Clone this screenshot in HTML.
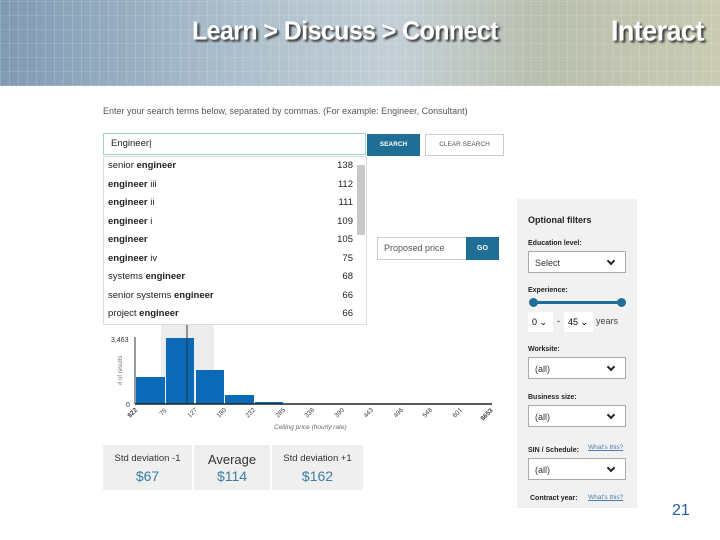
<!DOCTYPE html>
<html><head><style>
body{margin:0;width:720px;height:540px;position:relative;background:#fff;font-family:"Liberation Sans",sans-serif;overflow:hidden}
.a{position:absolute}
.hdr{left:0;top:0;width:720px;height:86px;background:linear-gradient(90deg,#7f9ab3 0%,#a9bccb 30%,#c3cfd6 55%,#b9bfae 75%,#c9cbb2 100%)}
.hdr:after{content:"";position:absolute;left:0;top:0;right:0;bottom:0;background:repeating-linear-gradient(90deg,rgba(255,255,255,.15) 0 1px,transparent 1px 9px),repeating-linear-gradient(0deg,rgba(255,255,255,.12) 0 1px,transparent 1px 14px)}
.ht{color:#fff;font-weight:bold;font-size:25px;text-shadow:2px 2px 2px #333;z-index:2;letter-spacing:-0.6px;transform:scaleY(1.05)}
.row{left:108px;width:245px;font-size:9.5px;color:#222;height:18.5px;line-height:18px}
.row span{position:absolute;right:0}
.sel{background:#fff;border:1px solid #aaa;font-size:9px;color:#333;height:22px;line-height:22px;padding-left:6px;box-sizing:border-box}
.sel:after{content:"";position:absolute;right:11px;top:6px;width:4px;height:4px;border-right:2px solid #222;border-bottom:2px solid #222;transform:rotate(45deg)}
.lb{font-size:7px;font-weight:bold;color:#222}
.cell{top:445px;height:45px;background:#efefef;text-align:center;color:#333}
.cell b{display:block;font-weight:normal;color:#3a7ea6;font-size:14px;margin-top:4px}
</style></head><body>
<div class="a hdr"></div>
<div class="a ht" style="left:192px;top:17px">Learn &gt; Discuss &gt; Connect</div>
<div class="a ht" style="left:611px;top:16px;font-size:27px">Interact</div>

<div class="a" style="left:103px;top:106px;font-size:9px;color:#555">Enter your search terms below, separated by commas. (For example: Engineer, Consultant)</div>
<div class="a" style="left:103px;top:133px;width:263px;height:22px;border:1px solid #9fd3d0;box-sizing:border-box;font-size:9.5px;line-height:20px;padding-left:7px;color:#222">Engineer|</div>
<div class="a" style="left:367px;top:134px;width:53px;height:22px;background:#1f6e96;color:#fff;font-size:6.5px;font-weight:bold;text-align:center;line-height:22px">SEARCH</div>
<div class="a" style="left:425px;top:134px;width:79px;height:22px;border:1px solid #ccc;box-sizing:border-box;color:#555;font-size:6.5px;text-align:center;line-height:20px">CLEAR SEARCH</div>

<div class="a" style="left:103px;top:156px;width:264px;height:169px;background:#fff;border:1px solid #ddd;box-sizing:border-box"></div>
<div class="a" style="left:357px;top:165px;width:8px;height:70px;background:#c8c8c8"></div>
<div class="a row" style="top:157px">senior <b>engineer</b><span>138</span></div>
<div class="a row" style="top:175.5px"><b>engineer</b> iii<span>112</span></div>
<div class="a row" style="top:194px"><b>engineer</b> ii<span>111</span></div>
<div class="a row" style="top:212.5px"><b>engineer</b> i<span>109</span></div>
<div class="a row" style="top:231px"><b>engineer</b><span>105</span></div>
<div class="a row" style="top:249.5px"><b>engineer</b> iv<span>75</span></div>
<div class="a row" style="top:268px">systems <b>engineer</b><span>68</span></div>
<div class="a row" style="top:286.5px">senior systems <b>engineer</b><span>66</span></div>
<div class="a row" style="top:305px">project <b>engineer</b><span>66</span></div>

<div class="a" style="left:377px;top:237px;width:90px;height:23px;border:1px solid #ccc;box-sizing:border-box;font-size:9px;color:#555;line-height:21px;padding-left:6px">Proposed price</div>
<div class="a" style="left:466px;top:237px;width:33px;height:23px;background:#1f6e96;color:#fff;font-size:7px;font-weight:bold;text-align:center;line-height:23px">GO</div>

<svg class="a" style="left:100px;top:320px" width="400" height="120">
<rect x="61" y="5" width="53" height="79" fill="#ececec"/>
<line x1="35" y1="17" x2="35" y2="84" stroke="#333"/>
<rect x="36" y="57" width="29" height="27" fill="#0a6ab8"/>
<rect x="66" y="18" width="28" height="66" fill="#0a6ab8"/>
<rect x="96" y="50" width="28" height="34" fill="#0a6ab8"/>
<rect x="125" y="75" width="29" height="9" fill="#0a6ab8"/>
<rect x="155" y="82" width="28" height="2" fill="#0a6ab8"/>
<line x1="87" y1="5" x2="87" y2="84" stroke="#333"/>
<line x1="35" y1="84" x2="392" y2="84" stroke="#222" stroke-width="1.5"/>
<text x="11" y="22" font-size="7" fill="#333">3,463</text>
<text x="26" y="87" font-size="7" fill="#333">0</text>
<text x="22" y="65" font-size="6" fill="#777" transform="rotate(-90 22 65)"># of results</text>
<g font-size="6.5" fill="#444">
<text x="30" y="98" transform="rotate(-45 30 98)" font-weight="bold">$22</text>
<text x="62" y="96" transform="rotate(-45 62 96)">75</text>
<text x="90" y="98" transform="rotate(-45 90 98)">127</text>
<text x="119" y="98" transform="rotate(-45 119 98)">180</text>
<text x="148" y="98" transform="rotate(-45 148 98)">232</text>
<text x="178" y="98" transform="rotate(-45 178 98)">285</text>
<text x="207" y="98" transform="rotate(-45 207 98)">338</text>
<text x="237" y="98" transform="rotate(-45 237 98)">390</text>
<text x="266" y="98" transform="rotate(-45 266 98)">443</text>
<text x="296" y="98" transform="rotate(-45 296 98)">496</text>
<text x="325" y="98" transform="rotate(-45 325 98)">548</text>
<text x="355" y="98" transform="rotate(-45 355 98)">601</text>
<text x="383" y="101" transform="rotate(-45 383 101)" font-weight="bold">$653</text>
</g>
<text x="174" y="109" font-size="6.5" font-style="italic" fill="#666">Ceiling price (hourly rate)</text>
</svg>

<div class="a cell" style="left:103px;width:89px;font-size:9.5px;padding-top:8px;box-sizing:border-box">Std deviation -1<b>$67</b></div>
<div class="a cell" style="left:194px;width:76px;font-size:13px;padding-top:7px;box-sizing:border-box">Average<b style="margin-top:1px">$114</b></div>
<div class="a cell" style="left:272px;width:91px;font-size:9.5px;padding-top:8px;box-sizing:border-box">Std deviation +1<b>$162</b></div>

<div class="a" style="left:517px;top:199px;width:120px;height:309px;background:#f1f1f1"></div>
<div class="a" style="left:528px;top:215px;font-size:9px;font-weight:bold;color:#222">Optional filters</div>
<div class="a lb" style="left:528px;top:240px">Education level:</div>
<div class="a sel" style="left:528px;top:251px;width:98px">Select</div>
<div class="a lb" style="left:528px;top:287px">Experience:</div>
<div class="a" style="left:533px;top:301px;width:89px;height:3px;background:#1f6e96"></div>
<div class="a" style="left:529px;top:298px;width:9px;height:9px;border-radius:50%;background:#1f6e96"></div>
<div class="a" style="left:617px;top:298px;width:9px;height:9px;border-radius:50%;background:#1f6e96"></div>
<div class="a" style="left:528px;top:312px;width:25px;height:20px;background:#fff;font-size:9px;line-height:20px;padding-left:4px;box-sizing:border-box">0 ⌄</div>
<div class="a" style="left:557px;top:316px;font-size:9px">-</div>
<div class="a" style="left:564px;top:312px;width:29px;height:20px;background:#fff;font-size:9px;line-height:20px;padding-left:4px;box-sizing:border-box">45 ⌄</div>
<div class="a" style="left:596px;top:316px;font-size:9px;color:#444">years</div>
<div class="a lb" style="left:528px;top:346px">Worksite:</div>
<div class="a sel" style="left:528px;top:357px;width:98px">(all)</div>
<div class="a lb" style="left:528px;top:394px">Business size:</div>
<div class="a sel" style="left:528px;top:405px;width:98px">(all)</div>
<div class="a lb" style="left:528px;top:447px">SIN / Schedule:</div>
<div class="a" style="left:588px;top:444px;font-size:6.5px;color:#4a7fb0;text-decoration:underline">What's this?</div>
<div class="a sel" style="left:528px;top:458px;width:98px">(all)</div>
<div class="a lb" style="left:530px;top:495px">Contract year:</div>
<div class="a" style="left:588px;top:494px;font-size:6.5px;color:#4a7fb0;text-decoration:underline">What's this?</div>

<div class="a" style="left:672px;top:502px;font-size:16px;color:#1f5f9e">21</div>
</body></html>
